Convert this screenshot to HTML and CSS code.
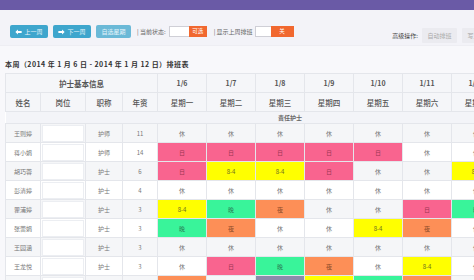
FILE: index.html
```html
<!DOCTYPE html>
<html lang="zh-CN">
<head>
<meta charset="utf-8">
<title>排班表</title>
<link rel="stylesheet" href="styles.css">
</head>
<body>
<div class="topbar"></div>
<div class="toolbar">
  <div class="tools-left">
    <button class="btn"><svg class="arrow" viewBox="0 0 10 8"><path d="M0.5 4 L4.2 0.6 L4.2 2.6 L9.5 2.6 L9.5 5.4 L4.2 5.4 L4.2 7.4 Z" fill="#fff"/></svg>上一周</button>
    <button class="btn"><svg class="arrow" viewBox="0 0 10 8"><path d="M9.5 4 L5.8 0.6 L5.8 2.6 L0.5 2.6 L0.5 5.4 L5.8 5.4 L5.8 7.4 Z" fill="#fff"/></svg>下一周</button>
    <button class="btn btn-light">自选星期</button>
    <span class="label">| 当前状态:</span>
    <span class="toggle"><span class="t-off"></span><span class="t-on t-on-wide">可选</span></span>
    <span class="label label-2">| 显示上周排班</span>
    <span class="toggle"><span class="t-off t-off-narrow"></span><span class="t-on t-on-2">关</span></span>
  </div>
  <div class="tools-right">
    <span class="label-dark">高级操作:</span>
    <button class="btn-gray">自动排班</button>
    <button class="btn-gray">写入排班</button>
  </div>
</div>
<div class="content">
  <div class="title">本周（2014 年 1 月 6 日 - 2014 年 1 月 12 日）排班表</div>
  <table class="sched">
    <colgroup>
      <col class="c-name"><col class="c-post"><col class="c-rank"><col class="c-year">
      <col class="c-day"><col class="c-day"><col class="c-day"><col class="c-day"><col class="c-day"><col class="c-day"><col class="c-day">
      <col class="c-extra">
    </colgroup>
    <thead>
      <tr class="hrow">
        <th colspan="4" class="th-main">护士基本信息</th>
        <th>1/6</th><th>1/7</th><th>1/8</th><th>1/9</th><th>1/10</th><th>1/11</th><th>1/12</th><th></th>
      </tr>
      <tr class="hrow">
        <th class="th-n">姓名</th><th class="th-n">岗位</th><th class="th-n">职称</th><th class="th-n">年资</th>
        <th class="th-n">星期一</th><th class="th-n">星期二</th><th class="th-n">星期三</th><th class="th-n">星期四</th><th class="th-n">星期五</th><th class="th-n">星期六</th><th class="th-n">星期日</th><th></th>
      </tr>
    </thead>
    <tbody>
      <tr class="group"><td colspan="12">责任护士</td></tr>
      <tr class="odd"><td>王则婷</td><td class="post"><span class="inp"></span></td><td>护师</td><td>11</td><td>休</td><td>休</td><td>休</td><td>休</td><td>休</td><td>休</td><td>休</td><td></td></tr>
      <tr><td>蒋小娟</td><td class="post"><span class="inp"></span></td><td>护师</td><td>14</td><td class="s-day">日</td><td class="s-day">日</td><td class="s-day">日</td><td class="s-day">日</td><td class="s-day">日</td><td>休</td><td>休</td><td></td></tr>
      <tr class="odd"><td>胡巧蓉</td><td class="post"><span class="inp"></span></td><td>护士</td><td>6</td><td class="s-day">日</td><td class="s-84">8-4</td><td class="s-84">8-4</td><td class="s-day">日</td><td>休</td><td>休</td><td class="s-84">8-4</td><td></td></tr>
      <tr><td>彭清婷</td><td class="post"><span class="inp"></span></td><td>护士</td><td>4</td><td>休</td><td>休</td><td>休</td><td>休</td><td>休</td><td>休</td><td>休</td><td></td></tr>
      <tr class="odd"><td>瞿浦婷</td><td class="post"><span class="inp"></span></td><td>护士</td><td>3</td><td class="s-84">8-4</td><td class="s-eve">晚</td><td class="s-night">夜</td><td>休</td><td>休</td><td class="s-day">日</td><td class="s-eve">晚</td><td></td></tr>
      <tr><td>张蕾娟</td><td class="post"><span class="inp"></span></td><td>护士</td><td>3</td><td class="s-eve">晚</td><td class="s-night">夜</td><td>休</td><td>休</td><td class="s-84">8-4</td><td class="s-night">夜</td><td>休</td><td></td></tr>
      <tr class="odd"><td>王园涵</td><td class="post"><span class="inp"></span></td><td>护士</td><td>3</td><td>休</td><td>休</td><td>休</td><td>休</td><td>休</td><td>休</td><td>休</td><td></td></tr>
      <tr><td>王龙悦</td><td class="post"><span class="inp"></span></td><td>护士</td><td>3</td><td>休</td><td class="s-day">日</td><td class="s-eve">晚</td><td class="s-night">夜</td><td>休</td><td class="s-84">8-4</td><td>休</td><td></td></tr>
      <tr class="odd"><td>宋琪瑶</td><td class="post"><span class="inp"></span></td><td>护士</td><td>3</td><td class="s-night">夜</td><td>休</td><td class="s-x">夜1</td><td class="s-84">8-4</td><td class="s-eve">晚</td><td class="s-night">夜</td><td>休</td><td></td></tr>
    </tbody>
  </table>
</div>
</body>
</html>
```
FILE: styles.css
```css
html, body {
  margin: 0;
  padding: 0;
  overflow: hidden;
}
body {
  width: 474px;
  height: 280px;
  background: #f8f8fb;
  font-family: "Noto Sans CJK SC", "Noto Sans", sans-serif;
  color: #555;
}
.topbar {
  height: 10px;
  background: #6a5aa6;
}
.toolbar {
  height: 35px;
  background: #f3f3f8;
  border-bottom: 1px solid #eeeef3;
  display: flex;
  justify-content: space-between;
  padding-left: 10px;
}
.tools-left {
  display: flex;
  align-items: center;
  height: 13px;
  margin-top: 15px;
  gap: 5px;
}
.btn {
  height: 13px;
  width: 38px;
  padding: 0;
  border: none;
  border-radius: 2px;
  background: #3ea6cd;
  color: #e6f4fa;
  font-family: inherit;
  font-size: 6px;
  line-height: 13px;
  display: flex;
  align-items: center;
  justify-content: center;
  gap: 2px;
}
.btn-light {
  width: 35px;
  background: #6bb9d7;
}
.arrow {
  width: 7px;
  height: 6px;
}
.label {
  font-size: 6px;
  color: #666;
  margin-left: 1px;
  margin-right: -2px;
  white-space: nowrap;
}
.label-2 {
  margin-left: 2px;
  margin-right: -3px;
}
.toggle {
  display: flex;
  height: 11px;
}
.t-off {
  width: 20px;
  background: #fff;
  border: 1px solid #cfcfd6;
  border-right: none;
  box-sizing: border-box;
}
.t-off-narrow {
  width: 16px;
}
.t-on {
  background: #f1682f;
  color: #fff;
  font-size: 5.5px;
  line-height: 11px;
  text-align: center;
}
.t-on-wide { width: 18px; }
.t-on-2 { width: 23px; }
.tools-right {
  display: flex;
  align-items: center;
  height: 13px;
  margin-top: 22px;
  gap: 5px;
  margin-right: -23px;
}
.label-dark {
  font-size: 6px;
  color: #444;
  margin-top: -6px;
  margin-right: -1px;
}
.btn-gray {
  width: 35px;
  height: 15px;
  margin-top: -7px;
  padding: 0;
  border: none;
  border-radius: 1px;
  background: #ebebf0;
  color: #aaa;
  font-family: inherit;
  font-size: 6px;
}
.content {
  padding: 14px 0 0 5px;
}
.title {
  font-size: 7px;
  line-height: 8px;
  font-weight: 700;
  color: #333;
  letter-spacing: 0.45px;
  white-space: nowrap;
  margin-bottom: 5px;
}
.sched {
  border-collapse: collapse;
  table-layout: fixed;
  width: 570px;
  background: #fff;
}
.c-name { width: 35px; }
.c-post { width: 45px; }
.c-rank { width: 37px; }
.c-year { width: 35px; }
.c-day { width: 49px; }
.c-extra { width: 74px; }
.sched th, .sched td {
  border: 1px solid #e4e6eb;
  padding: 0;
  text-align: center;
  white-space: nowrap;
  overflow: hidden;
}
.hrow th {
  height: 18px;
  background: #f5f6f9;
  font-size: 7px;
  font-weight: 700;
  color: #555;
}
.hrow .th-main {
  font-size: 7.5px;
}
.hrow .th-n {
  font-size: 7.5px;
  font-weight: 500;
  color: #555;
}
.group td {
  height: 11px;
  background: #f3f4f8;
  font-size: 6px;
  font-weight: 700;
  color: #666;
  line-height: 11px;
  border-left: none;
  border-right: none;
}
tbody tr td {
  height: 18px;
  font-size: 6px;
  color: #777;
}
tbody tr.odd td {
  background: #f5f6f8;
}
tbody tr.group td {
  height: 11px;
}
.post {
  padding: 1px 1px;
}
.inp {
  display: block;
  height: 15px;
  margin: 0 1px;
  background: #fff;
  border: 1px solid #eceef2;
}
tbody tr td.s-day { background: #f9648f; color: #9b3553; }
tbody tr td.s-84 { background: #ffff00; color: #6e6d20; }
tbody tr td.s-eve { background: #39f49a; color: #2c7d55; }
tbody tr td.s-night { background: #fd8f57; color: #8a4a28; }
tbody tr td.s-x { background: #8c8cab; color: #e8e8f2; }
```
